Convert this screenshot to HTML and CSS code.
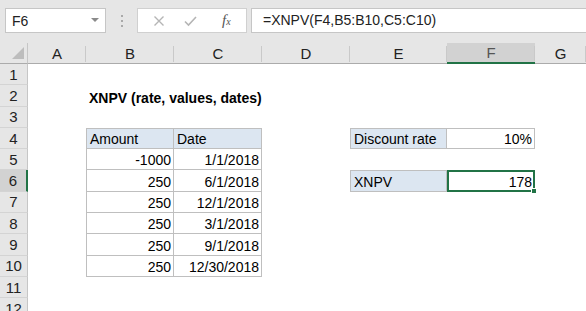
FILE: index.html
```html
<!DOCTYPE html>
<html>
<head>
	<title>XNPV</title>
	<meta charset="utf-8">
	<link rel="stylesheet" href="styles.css">
</head>
<body>
	<!--toolbar start-->
	<div class="toolbar">
		<div class="namebox">
			<span>F6</span>
			<svg class="arrow" width="8" height="5" viewBox="0 0 8 5"><path d="M0 0h8L4 4z" fill="#8a8a8a"/></svg>
		</div>
		<div class="dots"><i></i><i></i><i></i></div>
		<div class="fbtns">
			<svg width="12" height="12" viewBox="0 0 12 12"><path d="M1.5 1.5l9 9M10.5 1.5l-9 9" stroke="#b5b5b5" stroke-width="1.4"/></svg>
			<svg width="13" height="12" viewBox="0 0 13 12"><path d="M1 6.5l3.5 3.5L12 2" stroke="#b5b5b5" stroke-width="1.6" fill="none"/></svg>
			<span class="fx">f<sub>x</sub></span>
		</div>
		<div class="formula">=XNPV(F4,B5:B10,C5:C10)</div>
	</div>
	<!--end toolbar-->

	<!--sheet start-->
	<div class="sheet">
		<div class="corner"><svg width="12" height="12" viewBox="0 0 12 12"><path d="M12 0v12H0z" fill="#bdbdbd"/></svg></div>
		<div class="ch">A</div>
		<div class="ch">B</div>
		<div class="ch">C</div>
		<div class="ch">D</div>
		<div class="ch">E</div>
		<div class="ch sel">F</div>
		<div class="ch">G</div>

		<div class="rh">1</div><div></div><div></div><div></div><div></div><div></div><div></div><div></div>
		<div class="rh">2</div><div></div><div class="c title">XNPV (rate, values, dates)</div><div></div><div></div><div></div><div></div><div></div>
		<div class="rh">3</div><div></div><div></div><div></div><div></div><div></div><div></div><div></div>
		<div class="rh">4</div><div></div>
		<div class="c hd bd bl bt">Amount</div><div class="c hd bd bt">Date</div><div></div>
		<div class="c hd bd bl bt">Discount rate</div><div class="c r bd bt">10%</div><div></div>
		<div class="rh">5</div><div></div><div class="c r bd bl">-1000</div><div class="c r bd">1/1/2018</div><div></div><div></div><div></div><div></div>
		<div class="rh sel">6</div><div></div><div class="c r bd bl">250</div><div class="c r bd">6/1/2018</div><div></div>
		<div class="c hd bd bl bt">XNPV</div><div class="c r active">178<span class="handle"></span></div><div></div>
		<div class="rh">7</div><div></div><div class="c r bd bl">250</div><div class="c r bd">12/1/2018</div><div></div><div></div><div></div><div></div>
		<div class="rh">8</div><div></div><div class="c r bd bl">250</div><div class="c r bd">3/1/2018</div><div></div><div></div><div></div><div></div>
		<div class="rh">9</div><div></div><div class="c r bd bl">250</div><div class="c r bd">9/1/2018</div><div></div><div></div><div></div><div></div>
		<div class="rh">10</div><div></div><div class="c r bd bl">250</div><div class="c r bd">12/30/2018</div><div></div><div></div><div></div><div></div>
		<div class="rh">11</div><div></div><div></div><div></div><div></div><div></div><div></div><div></div>
		<div class="rh">12</div><div></div><div></div><div></div><div></div><div></div><div></div><div></div>
	</div>
	<!--end sheet-->
</body>
</html>
```
FILE: styles.css
```css
*{margin:0;padding:0;box-sizing:border-box;}
body{width:586px;height:311px;overflow:hidden;background:#fff;font-family:"Liberation Sans",Arial,sans-serif;font-size:14px;color:#000;}
/*toolbar start*/
.toolbar{height:43px;background:#e6e6e6;display:flex;align-items:flex-start;padding:8px 0 0 5px;}
.namebox{width:101px;height:25px;background:#fff;border:1px solid #c6c6c6;display:flex;align-items:center;justify-content:space-between;padding:0 6px 0 6px;font-size:14px;color:#222;}
.dots{width:31px;height:25px;display:flex;flex-direction:column;align-items:center;justify-content:center;gap:3px;}
.dots i{display:block;width:2px;height:2px;background:#a9a9a9;}
.fbtns{width:110px;height:25px;background:#fff;border:1px solid #d0d0d0;display:flex;align-items:center;padding:0 10px 0 15px;gap:19px;}
.fbtns .fx{font-family:"Liberation Serif",serif;font-style:italic;font-size:15px;color:#555;margin-left:6px;}
.fbtns .fx sub{font-size:10px;vertical-align:0;}
.formula{flex:1;height:25px;margin-left:4px;background:#fff;border:1px solid #c6c6c6;border-right:none;padding:3px 0 0 11px;font-size:14px;color:#222;}
/*end toolbar*/

/*sheet start*/
.sheet{display:grid;grid-template-columns:28px 58px 88px 88px 88px 97px 88px 51px;grid-template-rows:21px repeat(12,21.3px);}
.corner{background:#e6e6e6;border-right:1px solid #c6c6c6;border-bottom:1px solid #ababab;display:flex;align-items:flex-end;justify-content:flex-end;padding:0 3px 4px 0;}
.ch{background:#e6e6e6;border-bottom:1px solid #ababab;display:flex;align-items:center;justify-content:center;position:relative;color:#222;font-size:15px;}
.ch:after{content:"";position:absolute;right:0;top:3px;bottom:1px;width:1px;background:#c9c9c9;}
.ch.sel{background:#d2d2d2;color:#555;border-bottom:2px solid #217346;}
.rh{background:#e6e6e6;border-right:1px solid #c6c6c6;border-bottom:1px solid #d4d4d4;display:flex;align-items:center;justify-content:center;color:#222;font-size:15px;}
.rh.sel{background:#d2d2d2;border-right:2px solid #217346;}
.c{display:flex;align-items:flex-end;padding:0 2px 1px 3px;white-space:nowrap;}
.c.r{justify-content:flex-end;}
.title{font-weight:bold;overflow:visible;}
.hd{background:#dce6f1;}
.bd{border-right:1px solid #bfbfbf;border-bottom:1px solid #bfbfbf;}
.bl{border-left:1px solid #bfbfbf;}
.bt{border-top:1px solid #bfbfbf;}
.active{border:2px solid #217346;position:relative;padding:0 1px 0 3px;}
.active .handle{position:absolute;right:-4px;bottom:-4px;width:6px;height:6px;background:#217346;border:1px solid #fff;}
/*end sheet*/
```
